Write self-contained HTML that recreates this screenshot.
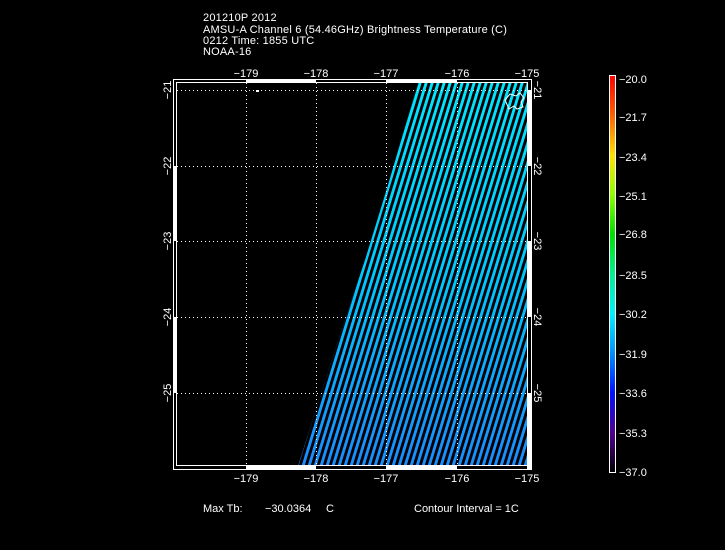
<!DOCTYPE html>
<html><head><meta charset="utf-8"><style>
html,body{margin:0;padding:0;background:#000;}
body{width:725px;height:550px;overflow:hidden;position:relative;}
svg{position:absolute;left:0;top:0;}
text{font-family:"Liberation Sans",sans-serif;font-size:11px;fill:#fff;}
</style></head><body>
<svg width="725" height="550" viewBox="0 0 725 550">
<defs>
<linearGradient id="sw" x1="0" y1="0" x2="0" y2="1">
<stop offset="0" stop-color="#00e6ff"/>
<stop offset="0.5" stop-color="#00c8ff"/>
<stop offset="1" stop-color="#1a8cff"/>
</linearGradient>
<pattern id="st" width="6" height="20" patternUnits="userSpaceOnUse" patternTransform="skewX(-17)">
<rect x="3" y="0" width="3" height="20" fill="#000"/>
</pattern>
<linearGradient id="cb" x1="0" y1="0" x2="0" y2="1">
<stop offset="0" stop-color="#ff0000"/>
<stop offset="0.1" stop-color="#ff6000"/>
<stop offset="0.2" stop-color="#ffe000"/>
<stop offset="0.3" stop-color="#90ff00"/>
<stop offset="0.4" stop-color="#00e000"/>
<stop offset="0.5" stop-color="#00f090"/>
<stop offset="0.6" stop-color="#00f0ff"/>
<stop offset="0.7" stop-color="#0090ff"/>
<stop offset="0.8" stop-color="#0010ff"/>
<stop offset="0.9" stop-color="#500090"/>
<stop offset="1" stop-color="#000000"/>
</linearGradient>
</defs>
<text x="203" y="21" letter-spacing="0.2">201210P 2012</text>
<text x="203" y="33" letter-spacing="0.2">AMSU-A Channel 6 (54.46GHz) Brightness Temperature (C)</text>
<text x="203" y="44" letter-spacing="0.2">0212 Time: 1855 UTC</text>
<text x="203" y="55" letter-spacing="0.2">NOAA-16</text>

<path d="M418,83 L527,83 L527,466 L298,466 L335,350 L365,260 L388,185 Z" fill="url(#sw)"/>
<path d="M418,83 L527,83 L527,466 L298,466 L335,350 L365,260 L388,185 Z" fill="url(#st)"/>
<path d="M505,100 l5,-6 l6,2 l4,-3 l4,5 l-3,4 l2,5 l-6,2 l-3,-3 l-5,3 z" fill="none" stroke="#fff" stroke-width="1"/>
<rect x="256" y="90" width="3" height="2" fill="#fff"/>

<g stroke="#fff" stroke-width="1" stroke-dasharray="1,3">
<line x1="246.5" y1="83" x2="246.5" y2="466"/>
<line x1="316.5" y1="83" x2="316.5" y2="466"/>
<line x1="386.5" y1="83" x2="386.5" y2="466"/>
<line x1="457.5" y1="83" x2="457.5" y2="466"/>
<line x1="177" y1="90.5" x2="527" y2="90.5"/>
<line x1="177" y1="166.5" x2="527" y2="166.5"/>
<line x1="177" y1="241.5" x2="527" y2="241.5"/>
<line x1="177" y1="317.5" x2="527" y2="317.5"/>
<line x1="177" y1="393.5" x2="527" y2="393.5"/>
</g>

<rect x="173.5" y="79.5" width="358" height="390" fill="none" stroke="#fff"/>
<rect x="176.5" y="82.5" width="351" height="383" fill="none" stroke="#fff"/>
<g fill="#fff">
<rect x="246" y="79" width="70" height="4"/>
<rect x="386" y="79" width="71" height="4"/>
<rect x="246" y="466" width="70" height="4"/>
<rect x="386" y="466" width="71" height="4"/>
<rect x="173" y="166" width="4" height="75"/>
<rect x="173" y="317" width="4" height="76"/>
<rect x="527" y="90" width="4" height="76"/>
<rect x="527" y="241" width="4" height="76"/>
<rect x="527" y="393" width="4" height="76"/>
</g>

<g text-anchor="middle">
<text x="246" y="77">−179</text>
<text x="316" y="77">−178</text>
<text x="386" y="77">−177</text>
<text x="457" y="77">−176</text>
<text x="527" y="77">−175</text>
<text x="246" y="482">−179</text>
<text x="316" y="482">−178</text>
<text x="386" y="482">−177</text>
<text x="457" y="482">−176</text>
<text x="527" y="482">−175</text>
</g>
<g text-anchor="middle">
<text transform="translate(171,90) rotate(-90)">−21</text>
<text transform="translate(171,166) rotate(-90)">−22</text>
<text transform="translate(171,241) rotate(-90)">−23</text>
<text transform="translate(171,317) rotate(-90)">−24</text>
<text transform="translate(171,393) rotate(-90)">−25</text>
<text transform="translate(534,90) rotate(90)">−21</text>
<text transform="translate(534,166) rotate(90)">−22</text>
<text transform="translate(534,241) rotate(90)">−23</text>
<text transform="translate(534,317) rotate(90)">−24</text>
<text transform="translate(534,393) rotate(90)">−25</text>
</g>

<rect x="609.5" y="75.5" width="6" height="397" fill="url(#cb)" stroke="#fff"/>
<g>
<text x="619" y="83">−20.0</text>
<text x="619" y="121">−21.7</text>
<text x="619" y="161">−23.4</text>
<text x="619" y="200">−25.1</text>
<text x="619" y="238">−26.8</text>
<text x="619" y="279">−28.5</text>
<text x="619" y="318">−30.2</text>
<text x="619" y="358">−31.9</text>
<text x="619" y="397">−33.6</text>
<text x="619" y="437">−35.3</text>
<text x="619" y="476">−37.0</text>
</g>

<text x="203" y="512">Max Tb:</text>
<text x="265" y="512">−30.0364</text>
<text x="326" y="512">C</text>
<text x="414" y="512">Contour Interval = 1C</text>
</svg>
</body></html>
